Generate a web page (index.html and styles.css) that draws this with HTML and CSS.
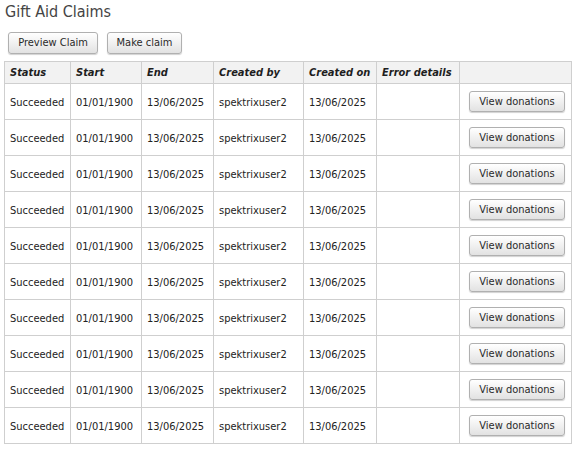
FILE: index.html
```html
<!DOCTYPE html>
<html>
<head>
<meta charset="utf-8">
<link rel="stylesheet" href="styles.css">
</head>
<body>
<h1 class="title">Gift Aid Claims</h1>
<div class="actions">
  <button class="btn btn-preview">Preview Claim</button>
  <button class="btn btn-make">Make claim</button>
</div>
<table class="claims">
  <colgroup>
    <col class="c-status"><col class="c-start"><col class="c-end"><col class="c-by"><col class="c-on"><col class="c-err"><col class="c-act">
  </colgroup>
  <thead>
    <tr><th>Status</th><th>Start</th><th>End</th><th>Created by</th><th>Created on</th><th>Error details</th><th></th></tr>
  </thead>
  <tbody>
    <tr><td>Succeeded</td><td>01/01/1900</td><td>13/06/2025</td><td>spektrixuser2</td><td>13/06/2025</td><td></td><td class="act"><button class="btn btn-view">View donations</button></td></tr>
    <tr><td>Succeeded</td><td>01/01/1900</td><td>13/06/2025</td><td>spektrixuser2</td><td>13/06/2025</td><td></td><td class="act"><button class="btn btn-view">View donations</button></td></tr>
    <tr><td>Succeeded</td><td>01/01/1900</td><td>13/06/2025</td><td>spektrixuser2</td><td>13/06/2025</td><td></td><td class="act"><button class="btn btn-view">View donations</button></td></tr>
    <tr><td>Succeeded</td><td>01/01/1900</td><td>13/06/2025</td><td>spektrixuser2</td><td>13/06/2025</td><td></td><td class="act"><button class="btn btn-view">View donations</button></td></tr>
    <tr><td>Succeeded</td><td>01/01/1900</td><td>13/06/2025</td><td>spektrixuser2</td><td>13/06/2025</td><td></td><td class="act"><button class="btn btn-view">View donations</button></td></tr>
    <tr><td>Succeeded</td><td>01/01/1900</td><td>13/06/2025</td><td>spektrixuser2</td><td>13/06/2025</td><td></td><td class="act"><button class="btn btn-view">View donations</button></td></tr>
    <tr><td>Succeeded</td><td>01/01/1900</td><td>13/06/2025</td><td>spektrixuser2</td><td>13/06/2025</td><td></td><td class="act"><button class="btn btn-view">View donations</button></td></tr>
    <tr><td>Succeeded</td><td>01/01/1900</td><td>13/06/2025</td><td>spektrixuser2</td><td>13/06/2025</td><td></td><td class="act"><button class="btn btn-view">View donations</button></td></tr>
    <tr><td>Succeeded</td><td>01/01/1900</td><td>13/06/2025</td><td>spektrixuser2</td><td>13/06/2025</td><td></td><td class="act"><button class="btn btn-view">View donations</button></td></tr>
    <tr><td>Succeeded</td><td>01/01/1900</td><td>13/06/2025</td><td>spektrixuser2</td><td>13/06/2025</td><td></td><td class="act"><button class="btn btn-view">View donations</button></td></tr>
  </tbody>
</table>
</body>
</html>
```
FILE: styles.css
```css
html, body {
  margin: 0;
  padding: 0;
  background: #fff;
}
body {
  padding: 0 4px;
  font-family: "DejaVu Sans Condensed", "DejaVu Sans", sans-serif;
  font-stretch: condensed;
  font-size: 11px;
  color: #222;
}
.title {
  margin: 0;
  padding: 2px 0 0 1px;
  height: 30px;
  box-sizing: border-box;
  font-size: 16px;
  font-weight: normal;
  color: #444;
  line-height: 20px;
}
.actions {
  display: flex;
  gap: 9px;
  padding-left: 4px;
  height: 31px;
  align-items: flex-start;
  padding-top: 2px;
  box-sizing: border-box;
}
.btn {
  font-family: inherit;
  font-stretch: condensed;
  font-size: 11px;
  color: #2a2a2a;
  background: linear-gradient(#ffffff, #e2e2e2);
  border: 1px solid #b0b0b0;
  border-radius: 3px;
  box-shadow: 0 1px 1px rgba(0,0,0,0.18);
  padding: 0;
  height: 22px;
  line-height: 20px;
  cursor: pointer;
}
.btn-preview { width: 90px; }
.btn-make { width: 75px; }
.btn-view { width: 96px; height: 21px; line-height: 19px; }
.claims {
  border-collapse: collapse;
  table-layout: fixed;
  width: 568px;
}
.c-status { width: 66px; }
.c-start { width: 71px; }
.c-end { width: 72px; }
.c-by { width: 90px; }
.c-on { width: 73px; }
.c-err { width: 83px; }
.c-act { width: 112px; }
.claims th, .claims td {
  border: 1px solid #cfcfcf;
  text-align: left;
  padding: 0 0 0 5px;
  white-space: nowrap;
  overflow: hidden;
}
.claims th {
  background: #f2f2f2;
  font-weight: bold;
  font-style: italic;
  color: #1e1e1e;
  height: 21px;
}
.claims td {
  height: 34px;
  padding-top: 1px;
}
.claims td.act {
  text-align: right;
  padding-right: 6px;
  padding-top: 0;
  padding-bottom: 1px;
  font-size: 0;
}
```
